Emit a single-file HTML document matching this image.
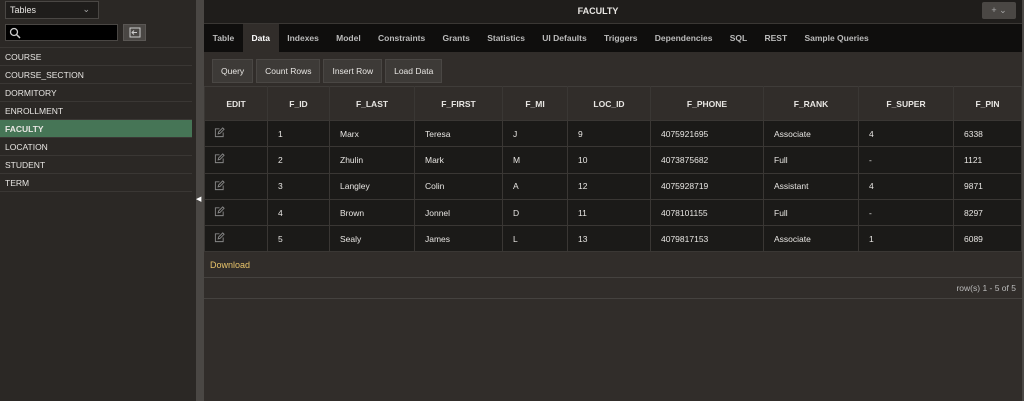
<!DOCTYPE html>
<html><head><style>
*{box-sizing:border-box;margin:0;padding:0}
body{width:1024px;height:401px;overflow:hidden;background:#312d2a;font-family:"Liberation Sans",sans-serif;color:#e8e6e3;font-size:9px;position:relative}
.side{position:absolute;left:0;top:0;width:196px;height:401px;background:#2b2825}
.split{position:absolute;left:196px;top:0;width:8px;height:401px;background:#4a4744}
.sel{position:absolute;left:5px;top:1px;width:94px;height:18px;border:1px solid #4a4744;background:#1f1d1b;padding:3px 4px;font-size:9px}
.srch{position:absolute;left:5px;top:24px;width:113px;height:17px;background:#000;border:1px solid #4a4744}
.btn2{position:absolute;left:123px;top:24px;width:23px;height:17px;background:#4a4744;border:1px solid #5a5754}
.list{position:absolute;left:0;top:47px;width:192px;border-top:1px solid #3a3734}
.list div{height:18px;line-height:18px;padding-left:5px;border-bottom:1px solid #3a3734;font-size:8.5px}
.list .on{background:#467556;font-weight:bold}
.main{position:absolute;left:204px;top:0;width:818px;height:401px}
.hdr{height:24px;background:#1f1d1b;border-bottom:1px solid #3a3734;text-align:center;font-weight:bold;font-size:9px;line-height:22px;padding-right:30px}
.plus{position:absolute;right:6px;top:2px;width:34px;height:17px;background:#4a4744;border-radius:2px;color:#aaa;font-size:9px;text-align:center;line-height:17px}
.tabs{height:28px;background:#0f0e0d;display:flex;font-size:8.5px;font-weight:bold;color:#bbb}
.tabs span{padding:0 8.65px;line-height:28px}
.tabs .a{background:#312d2a;color:#fff}
.tb{height:34px;padding:7px 0 0 8px;display:flex;gap:3px}
.tb span{border:1px solid #4a4744;background:#3d3a37;height:24px;line-height:22px;padding:0 8px;font-size:8.5px}
table{border-collapse:collapse;width:818px;font-size:8.5px}
th{height:34px;font-weight:bold;border:1px solid #3a3734;border-top:1px solid #3f3c39;font-size:8.5px}
td{height:26.3px;background:#1b1a18;border:1px solid #3a3734;padding-left:10px}
td.e{padding-left:9px}
.dl{height:26px;line-height:26px;padding-left:6px;color:#e9c46a;border-bottom:1px solid #45423f}
.pg{height:21px;line-height:21px;text-align:right;padding-right:6px;color:#bbb;border-bottom:1px solid #45423f;font-size:8.5px}
</style></head><body>
<svg width="0" height="0" style="position:absolute"><defs><symbol id="ed" viewBox="0 0 12 12"><path d="M6 2H1.5V10.5H10V6" fill="none" stroke="#888" stroke-width="1"/><path d="M4.5 7.5L5 5.5L9.5 1L11 2.5L6.5 7Z" fill="none" stroke="#888" stroke-width="1"/></symbol></defs></svg>
<div class="side">
<div class="sel">Tables<span style="position:absolute;right:8px;top:2px;color:#aaa">&#8964;</span></div>
<div class="srch"><svg width="12" height="12" style="position:absolute;left:3px;top:2px"><circle cx="5" cy="5" r="3.5" stroke="#ccc" fill="none" stroke-width="1.3"/><line x1="7.5" y1="7.5" x2="11" y2="11" stroke="#ccc" stroke-width="1.5"/></svg></div>
<div class="btn2"><svg width="21" height="15"><rect x="6" y="3" width="10" height="9" fill="none" stroke="#ccc"/><path d="M13 7.5H8M10 5.5L8 7.5L10 9.5" fill="none" stroke="#ccc"/></svg></div>
<div class="list"><div>COURSE</div><div>COURSE_SECTION</div><div>DORMITORY</div><div>ENROLLMENT</div><div class="on">FACULTY</div><div>LOCATION</div><div>STUDENT</div><div>TERM</div></div>
</div>
<div class="split"><span style="position:absolute;left:0;top:195px;color:#fff;font-size:7px">&#9664;</span></div>
<div class="main">
<div class="hdr">FACULTY</div><div class="plus">+ &#8964;</div>
<div class="tabs"><span>Table</span><span class="a">Data</span><span>Indexes</span><span>Model</span><span>Constraints</span><span>Grants</span><span>Statistics</span><span>UI Defaults</span><span>Triggers</span><span>Dependencies</span><span>SQL</span><span>REST</span><span>Sample Queries</span></div>
<div class="tb"><span>Query</span><span>Count Rows</span><span>Insert Row</span><span>Load Data</span></div>
<table>
<tr><th style="width:63px">EDIT</th><th style="width:62px">F_ID</th><th style="width:85px">F_LAST</th><th style="width:88px">F_FIRST</th><th style="width:65px">F_MI</th><th style="width:83px">LOC_ID</th><th style="width:113px">F_PHONE</th><th style="width:95px">F_RANK</th><th style="width:95px">F_SUPER</th><th>F_PIN</th></tr>
<tr><td class="e"><svg width="11" height="11"><use href="#ed"/></svg></td><td>1</td><td>Marx</td><td>Teresa</td><td>J</td><td>9</td><td>4075921695</td><td>Associate</td><td>4</td><td>6338</td></tr>
<tr><td class="e"><svg width="11" height="11"><use href="#ed"/></svg></td><td>2</td><td>Zhulin</td><td>Mark</td><td>M</td><td>10</td><td>4073875682</td><td>Full</td><td>-</td><td>1121</td></tr>
<tr><td class="e"><svg width="11" height="11"><use href="#ed"/></svg></td><td>3</td><td>Langley</td><td>Colin</td><td>A</td><td>12</td><td>4075928719</td><td>Assistant</td><td>4</td><td>9871</td></tr>
<tr><td class="e"><svg width="11" height="11"><use href="#ed"/></svg></td><td>4</td><td>Brown</td><td>Jonnel</td><td>D</td><td>11</td><td>4078101155</td><td>Full</td><td>-</td><td>8297</td></tr>
<tr><td class="e"><svg width="11" height="11"><use href="#ed"/></svg></td><td>5</td><td>Sealy</td><td>James</td><td>L</td><td>13</td><td>4079817153</td><td>Associate</td><td>1</td><td>6089</td></tr>
</table>
<div class="dl">Download</div>
<div class="pg">row(s) 1 - 5 of 5</div>
</div>
<div style="position:absolute;left:1022px;top:0;width:2px;height:401px;background:#4a4744"></div>
</body></html>
